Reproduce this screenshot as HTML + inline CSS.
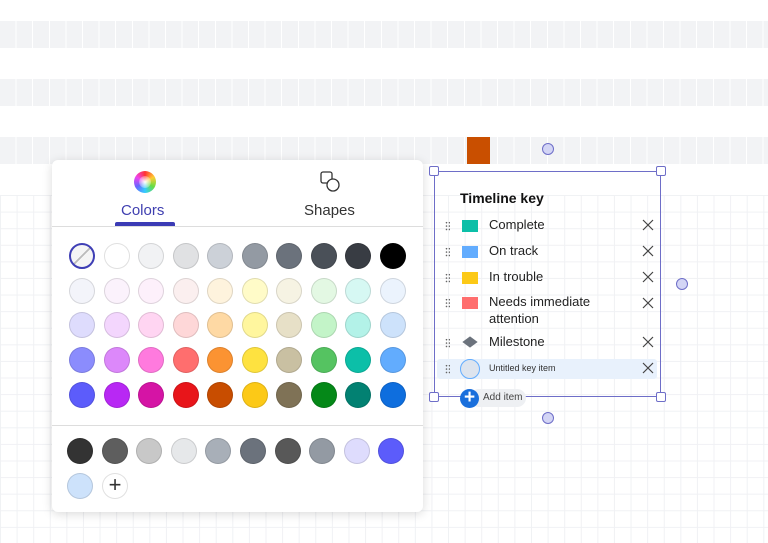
<!DOCTYPE html><html><head><style>
*{margin:0;padding:0;box-sizing:border-box}
body{width:768px;height:543px;overflow:hidden;background:#fff;font-family:"Liberation Sans",sans-serif;position:relative}
.band{position:absolute;left:0;width:768px;height:27px;background:repeating-linear-gradient(90deg,#f2f3f5 0 15.6px,#fff 15.6px 16.6px)}
.grid{position:absolute;left:0;top:195px;width:768px;height:348px;background-image:linear-gradient(#f0f1f4 1px,transparent 1px),linear-gradient(90deg,#f0f1f4 1px,transparent 1px);background-size:16.6px 16.6px}
.panel{position:absolute;left:52px;top:160px;width:371px;height:352px;background:#fff;border-radius:6px;box-shadow:0 2px 10px rgba(0,0,0,.15)}
.sw{position:absolute;width:26px;height:26px;border-radius:50%;border:1px solid rgba(0,0,0,.12)}
.abs{position:absolute}
.key{position:absolute;left:434px;top:171px;width:227px;height:226px;border:1.5px solid #6e6ec8}
.h{position:absolute;width:10px;height:10px;border:1.3px solid #6e6ec8;background:#fff;border-radius:2px}
.c{position:absolute;width:12px;height:12px;border-radius:50%;border:1.3px solid #6e6ec8;background:#d3d5f5}
.row{position:absolute;left:489px;font-size:13px;color:#222}
.dots{position:absolute;left:445px;width:5px;height:10px;background-image:radial-gradient(#666 0.7px,transparent 0.9px);background-size:3px 3.4px}
.x{position:absolute;left:642px;width:12px;height:12px;z-index:5}
.sq{position:absolute;left:462px;width:16px;height:12px}
</style></head><body>
<div class="band" style="top:21px"></div>
<div class="band" style="top:79px"></div>
<div class="band" style="top:137px"></div>
<div class="grid"></div>
<div class="abs" style="left:467px;top:137px;width:23px;height:27px;background:#c94f00"></div>
<div class="c" style="left:542px;top:143px"></div>
<div class="c" style="left:676px;top:278px"></div>
<div class="c" style="left:542px;top:412px"></div>
<div class="panel">
 <div class="abs" style="left:82px;top:11px;width:22px;height:22px;border-radius:50%;background:conic-gradient(#f33,#fc3,#6d4,#3cf,#66f,#e4e,#f33)"></div>
 <div class="abs" style="left:87px;top:16px;width:12px;height:12px;border-radius:50%;background:radial-gradient(#fff,rgba(255,255,255,0))"></div>
 <div class="abs" style="left:69px;top:42px;font-size:15px;color:#3f3fb0">Colors</div>
 <div class="abs" style="left:63px;top:62px;width:60px;height:4px;background:#3b3bb5;border-radius:2px 2px 0 0"></div>
 <svg class="abs" style="left:268px;top:11px" width="22" height="22"><rect x="1" y="1" width="11" height="11" rx="2" fill="none" stroke="#333" stroke-width="1.3"/><circle cx="13" cy="14" r="6" fill="#fff" stroke="#333" stroke-width="1.3"/></svg>
 <div class="abs" style="left:252px;top:42px;font-size:15px;color:#333">Shapes</div>
 <div class="abs" style="left:0;top:66px;width:371px;height:1px;background:#ddd"></div>
 <div class="abs" style="left:0;top:265px;width:371px;height:1px;background:#ddd"></div>
</div>
<div id="sw"></div>
<script>
var rows=[["none","#fff","#f1f2f4","#e0e1e3","#ccd1d8","#939aa3","#6b727c","#4a5058","#383c43","#000"],
["#f3f4fa","#fbf2fc","#fdf0fb","#fbefef","#fef3dd","#fffbc8","#f6f3e3","#e3f8e3","#d6f8f3","#ebf3fd"],
["#dedcfd","#f3d6fd","#ffd5f2","#fed7d8","#fed9a4","#fff69e","#e7e0c7","#c3f4c8","#b3f2e8","#cde2fb"],
["#8b8cfd","#dc88fa","#ff7ade","#ff6e6e","#fb9332","#fee240","#c9c0a2","#55c361","#0cbfa8","#62acfe"],
["#5c5cfb","#b828f4","#d514a5","#e8151a","#c84d00","#fcc917","#7f7256","#058818","#028172","#0e6ede"]];
var h="";
rows.forEach(function(r,i){r.forEach(function(c,j){var x=69+j*34.5,y=243+i*34.7;
if(c=="none")h+='<div class="sw" style="left:'+x+'px;top:'+y+'px;border:2px solid #3f3fb5;background:linear-gradient(135deg,transparent 47%,#bbb 47%,#bbb 53%,transparent 53%) ,#f5f5f5"></div>';
else h+='<div class="sw" style="left:'+x+'px;top:'+y+'px;background:'+c+'"></div>';});});
["#333","#5e5e5e","#c8c8c8","#e6e8ea","#a8afb8","#6b727c","#585858","#939aa3","#dedcfd","#5c5cfb"].forEach(function(c,j){
h+='<div class="sw" style="left:'+(67+j*34.6)+'px;top:438px;background:'+c+'"></div>';});
h+='<div class="sw" style="left:67px;top:473px;background:#cde2fb"></div>';
h+='<div class="sw" style="left:102px;top:473px;background:#fff;text-align:center;line-height:22px;font-size:22px;color:#333">+</div>';
[219,245,271,297,336,362].forEach(function(t){h+='<svg class="x" style="top:'+t+'px" viewBox="0 0 12 12"><path d="M1 1L11 11M11 1L1 11" stroke="#444" stroke-width="1.2"/></svg>';});
document.getElementById("sw").innerHTML=h;
</script>
<div class="key"></div>
<div class="h" style="left:429px;top:166px"></div><div class="h" style="left:656px;top:166px"></div>
<div class="h" style="left:429px;top:392px"></div><div class="h" style="left:656px;top:392px"></div>
<div class="abs" style="left:460px;top:190px;font-size:14px;font-weight:bold;color:#111">Timeline key</div>
<div class="abs" style="left:437px;top:359px;width:220px;height:20px;background:#e8f1fc;border-radius:3px"></div>
<div class="dots" style="top:221px"></div><div class="sq" style="top:220px;background:#0cbfa8"></div><div class="row" style="top:217px">Complete</div>
<div class="dots" style="top:247px"></div><div class="sq" style="top:246px;background:#62acfe"></div><div class="row" style="top:243px">On track</div>
<div class="dots" style="top:273px"></div><div class="sq" style="top:272px;background:#fcc917"></div><div class="row" style="top:269px">In trouble</div>
<div class="dots" style="top:298px"></div><div class="sq" style="top:297px;background:#ff6e6e"></div><div class="row" style="top:293px;line-height:17px">Needs immediate<br>attention</div>
<div class="dots" style="top:338px"></div><div class="abs" style="left:466px;top:338px;width:8px;height:8px;background:#6b727c;transform:scaleX(1.35) rotate(45deg)"></div><div class="row" style="top:334px">Milestone</div>
<div class="dots" style="top:364px"></div><div class="abs" style="left:460px;top:359px;width:20px;height:20px;border-radius:50%;border:1.5px solid #62acfe;background:#dde4ee"></div><div class="row" style="top:363px;font-size:9px;color:#333">Untitled key item</div>
<div class="abs" style="left:470px;top:389px;width:56px;height:18px;border-radius:9px;background:#eef0f3"></div>
<div class="abs" style="left:483px;top:392px;font-size:10px;color:#444">Add item</div>
<div class="abs" style="left:460px;top:389px;width:19px;height:19px;border-radius:50%;background:#1a6fdc;color:#fff;text-align:center;font-size:19px;line-height:18px;font-weight:bold">+</div>
</body></html>
